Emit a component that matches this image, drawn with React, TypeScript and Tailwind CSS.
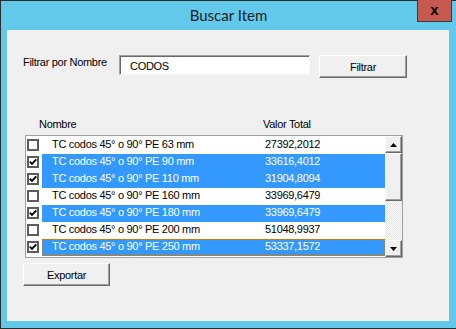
const rows = [
  { name: "TC codos 45° o 90° PE 63 mm", value: "27392,2012", checked: false, selected: false },
  { name: "TC codos 45° o 90° PE 90 mm", value: "33616,4012", checked: true, selected: true },
  { name: "TC codos 45° o 90° PE 110 mm", value: "31904,8094", checked: true, selected: true },
  { name: "TC codos 45° o 90° PE 160 mm", value: "33969,6479", checked: false, selected: false },
  { name: "TC codos 45° o 90° PE 180 mm", value: "33969,6479", checked: true, selected: true },
  { name: "TC codos 45° o 90° PE 200 mm", value: "51048,9937", checked: false, selected: false },
  { name: "TC codos 45° o 90° PE 250 mm", value: "53337,1572", checked: true, selected: true, focused: true },
];

const raised =
  "bg-[#f0f0f0] border border-t-white border-l-white border-r-[#696969] border-b-[#696969] shadow-[inset_-1px_-1px_0_#a0a0a0]";

function CheckBox({ checked }: { checked: boolean }) {
  return (
    <div className="w-[12px] h-[12px] border-2 border-[#5c5c5c] bg-white flex items-center justify-center">
      {checked && (
        <svg width="8" height="8" viewBox="0 0 8 8">
          <path d="M0.8 3.6 L3 5.9 L7.3 1.4" fill="none" stroke="#000" strokeWidth="1.9" />
        </svg>
      )}
    </div>
  );
}

function Arrow({ up }: { up: boolean }) {
  return (
    <svg width="7" height="4" viewBox="0 0 7 4">
      <path d={up ? "M0 4 L3.5 0 L7 4 Z" : "M0 0 L7 0 L3.5 4 Z"} fill="#000" />
    </svg>
  );
}

export default function App() {
  return (
    <div
      className="w-[456px] h-[329px] bg-[#63c9ea] border-t border-l border-b border-[#2b2b2b] relative flex flex-col text-[11px] tracking-[-0.3px] text-black"
      style={{ fontFamily: '"Liberation Sans", Arial, sans-serif' }}
    >
      {/* Title bar */}
      <div className="h-[29px] flex items-center justify-center shrink-0">
        <span className="text-[15px] tracking-normal text-[#1e1e1e]" style={{ fontFamily: "Lato, sans-serif" }}>
          Buscar Item
        </span>
      </div>
      <div className="absolute top-[-1px] right-[4px] w-[35px] h-[22px] bg-[#c75a50] border-l border-r border-b border-[#3a3a3a] flex items-center justify-center">
        <span className="text-[15px] font-bold leading-none tracking-normal -mt-[3px]">x</span>
      </div>

      {/* Client area */}
      <div className="ml-[6px] w-[442px] h-[291px] bg-[#f0f0f0] flex flex-col">
        {/* Filter row */}
        <div className="mt-[25px] ml-[16px] flex items-start">
          <div className="w-[96px] mt-[1px] leading-[13px]">Filtrar por Nombre</div>
          <div className="w-[191px] h-[20px] bg-white border border-t-[#a0a0a0] border-l-[#a0a0a0] border-r-[#f6f6f6] border-b-[#f6f6f6] shadow-[inset_1px_1px_0_#696969] pl-[10px] pt-[4px] leading-[13px]">
            CODOS
          </div>
          <div className={`ml-[9px] w-[88px] h-[23px] flex items-center justify-center pt-[1px] ${raised}`}>Filtrar</div>
        </div>

        {/* Headers */}
        <div className="mt-[40px] ml-[32px] flex leading-[13px]">
          <div className="w-[224px]">Nombre</div>
          <div>Valor Total</div>
        </div>

        {/* List box */}
        <div className="mt-[4px] ml-[18px] w-[378px] h-[123px] border border-[#a0a0a0] bg-white flex">
          <div className="flex-1 pt-[1px] flex flex-col">
            {rows.map((r) => (
              <div key={r.name} className="h-[17px] flex">
                <div className="w-[16px] pl-[1px] pt-[2px] shrink-0">
                  <CheckBox checked={r.checked} />
                </div>
                <div
                  className={`flex-1 flex leading-[13px] pt-[1px] ${
                    r.selected ? "bg-[#3399ff] text-white" : "text-black"
                  } ${r.focused ? "outline-1 outline-dotted outline-[#d07a00] -outline-offset-1" : ""}`}
                >
                  <div className="w-[223px] pl-[10px]">{r.name}</div>
                  <div>{r.value}</div>
                </div>
              </div>
            ))}
          </div>

          {/* Scrollbar */}
          <div className="w-[17px] flex flex-col shrink-0">
            <div className={`h-[17px] flex items-center justify-center ${raised}`}>
              <Arrow up />
            </div>
            <div className={`h-[48px] ${raised}`} />
            <div className="flex-1 bg-[repeating-conic-gradient(#ffffff_0%_25%,#e4e4e4_0%_50%)] bg-[length:2px_2px]" />
            <div className={`h-[17px] flex items-center justify-center ${raised}`}>
              <Arrow up={false} />
            </div>
          </div>
        </div>

        {/* Export */}
        <div className={`mt-[5px] ml-[16px] w-[87px] h-[23px] flex items-center justify-center pt-[2px] ${raised}`}>
          Exportar
        </div>
      </div>
    </div>
  );
}
